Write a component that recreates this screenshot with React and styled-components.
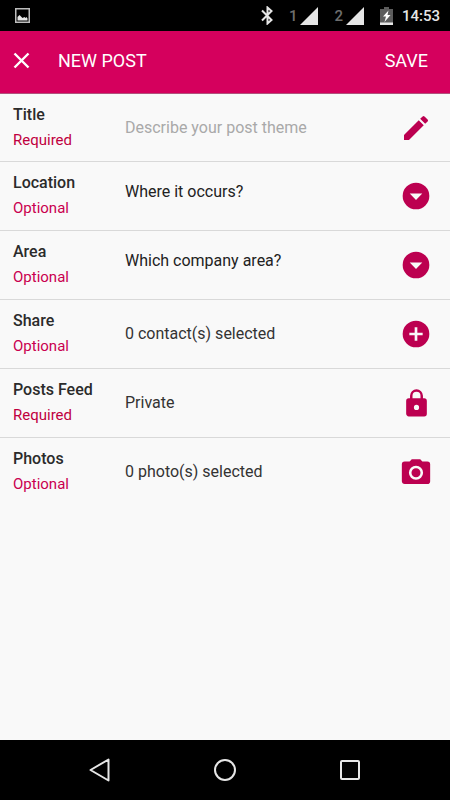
import React, { useState } from "react";
import styled, { createGlobalStyle } from "styled-components";

const GlobalStyle = createGlobalStyle`
    * {
        box-sizing: border-box;
    }

    body {
        margin: 0;
        background-color: #f9f9f9;
        font-family: Roboto, "Liberation Sans", sans-serif;
    }

    button, input, select {
        font-family: inherit;
    }
`;

const Screen = styled.div`
    display: flex;
    flex-direction: column;
    min-height: 100vh;
    background-color: #f9f9f9;
`;

const StatusBar = styled.div`
    display: flex;
    align-items: center;
    height: 31px;
    padding: 0 10px 0 15px;
    background-color: #000;
    color: #e6e6e6;
`;

const StatusIcons = styled.div`
    display: flex;
    align-items: center;
    margin-left: auto;
`;

const BluetoothIcon = styled.svg`
    margin-right: 16px;
`;

const Sim = styled.div`
    display: flex;
    align-items: center;
    gap: 3px;
    margin-right: 16px;
    color: #6e6e6e;
    font-size: 15px;
    font-weight: 500;
    line-height: 20px;
`;

const Clock = styled.time`
    margin-left: 9px;
    font-size: 15px;
    font-weight: 500;
    line-height: 20px;
`;

const Toolbar = styled.header`
    display: flex;
    align-items: center;
    height: 63px;
    padding: 0 22px 2px 12px;
    background-color: #d5005d;
    border-bottom: 1px solid #b0527c;
    color: #fff;
`;

const ToolbarTitle = styled.h1`
    margin: 0 auto 0 26px;
    font-size: 18px;
    font-weight: 400;
    line-height: 24px;
`;

const PlainButton = styled.button`
    display: flex;
    align-items: center;
    justify-content: center;
    padding: 0;
    border: none;
    background: none;
    color: inherit;
    font-size: 18px;
    line-height: 24px;
    cursor: pointer;

    svg {
        flex-shrink: 0;
    }
`;

const Form = styled.main`
    flex: 1;
`;

const Row = styled.div`
    display: grid;
    grid-template-columns: 112px 1fr 36px;
    align-items: center;
    height: ${(props) => (props.$compact ? "68px" : "69px")};
    padding: 0 18px 0 13px;
    border-bottom: 1px solid #d9d9d9;

    &:last-child {
        border-bottom-color: transparent;
    }
`;

const Label = styled.label`
    display: block;
    color: #2b2b2b;
    font-size: 16px;
    font-weight: 500;
    line-height: 24px;
`;

const Hint = styled.span`
    display: block;
    color: ${(props) => (props.$required ? "#c0003f" : "#c9004f")};
    font-size: 15px;
    font-weight: 400;
    line-height: 26px;
`;

const TextInput = styled.input`
    width: 100%;
    padding: 0;
    border: none;
    outline: none;
    background: none;
    color: #2b2b2b;
    font-size: 16px;
    line-height: 24px;

    &::placeholder {
        color: #a9a9a9;
        opacity: 1;
    }
`;

const Select = styled.select`
    appearance: none;
    width: 100%;
    height: 24px;
    margin-bottom: 8px;
    padding: 0;
    border: none;
    outline: none;
    background: none;
    color: #222;
    font-size: 16px;
    line-height: 24px;
`;

const Value = styled.output`
    color: #333;
    font-size: 16px;
    line-height: 24px;
`;

const Action = styled(PlainButton)`
    width: 32px;
    height: 32px;
    justify-self: end;
    color: #bc0050;
`;

const NavBar = styled.nav`
    display: flex;
    align-items: center;
    justify-content: center;
    gap: 93px;
    height: 60px;
    background-color: #000;
    color: #e6e6e6;
`;

const NavButton = styled(PlainButton)`
    width: 32px;
    height: 32px;
`;

const icons = {
    edit: "M3 17.25V21h3.75L17.81 9.94l-3.75-3.75L3 17.25zM20.71 7.04a1 1 0 0 0 0-1.41l-2.34-2.34a1 1 0 0 0-1.41 0l-1.83 1.83 3.75 3.75 1.83-1.83z",
    down: "M12 2a10 10 0 1 0 0 20 10 10 0 0 0 0-20zM7.3 10.2h9.4L12 15z",
    add: "M12 2a10 10 0 1 0 0 20 10 10 0 0 0 0-20zm5 11h-4v4h-2v-4H7v-2h4V7h2v4h4v2z",
    lock: "M18 8h-1V6A5 5 0 0 0 7 6v2H6a2 2 0 0 0-2 2v10c0 1.1.9 2 2 2h12a2 2 0 0 0 2-2V10a2 2 0 0 0-2-2zm-6 9a2 2 0 1 1 0-4 2 2 0 0 1 0 4zm3.1-9H8.9V6a3.1 3.1 0 0 1 6.2 0v2z",
    camera: "M9 3 7.5 4.5H4a2 2 0 0 0-2 2v12c0 1.1.9 2 2 2h16a2 2 0 0 0 2-2v-12a2 2 0 0 0-2-2h-3.5L15 3H9zm3 14.5a5 5 0 1 1 0-10 5 5 0 0 1 0 10zm0-1.8a3.2 3.2 0 1 0 0-6.4 3.2 3.2 0 0 0 0 6.4z",
};

const Icon = ({ name, size = 32 }) => (
    <svg
        width={size}
        height={size}
        viewBox="0 0 24 24"
        fill="currentColor"
        fillRule="evenodd"
        aria-hidden="true"
    >
        <path d={icons[name]} />
    </svg>
);

const Signal = () => (
    <svg width="18" height="18" viewBox="0 0 18 18" aria-hidden="true">
        <path d="M18 0v18H0z" fill="#e6e6e6" />
    </svg>
);

const FieldLabel = ({ id, title, required }) => (
    <Label htmlFor={id}>
        {title}
        <Hint $required={required}>{required ? "Required" : "Optional"}</Hint>
    </Label>
);

const SelectRow = ({ id, title, prompt, options }) => (
    <Row>
        <FieldLabel id={id} title={title} />
        <Select id={id} defaultValue="">
            <option value="">{prompt}</option>
            {options.map((option) => (
                <option key={option}>{option}</option>
            ))}
        </Select>
        <Action as="label" htmlFor={id}>
            <Icon name="down" />
        </Action>
    </Row>
);

const ValueRow = ({ id, title, required, value, icon, iconSize, action, onAction }) => (
    <Row>
        <FieldLabel id={id} title={title} required={required} />
        <Value id={id}>{value}</Value>
        <Action type="button" aria-label={action} onClick={onAction}>
            <Icon name={icon} size={iconSize} />
        </Action>
    </Row>
);

const App = () => {
    const [title, setTitle] = useState("");
    const [isPrivate, setIsPrivate] = useState(true);

    return (
        <Screen>
            <GlobalStyle />
            <StatusBar>
                <svg width="15" height="15" viewBox="0 0 15 15" aria-hidden="true">
                    <path d="M.75.75h13.5v13.5H.75z" fill="none" stroke="#bdbdbd" strokeWidth="1.5" />
                    <path d="M2.5 12.5V9l2-2 2 2 1 1 2-1 1 1 1-1 1 1.5v2z" fill="#e6e6e6" />
                </svg>
                <StatusIcons>
                    <BluetoothIcon width="12" height="19" viewBox="0 0 12 19" aria-hidden="true">
                        <path
                            d="M1 4.5 10.5 14l-4 3.5v-16l4 3.5L1 14.5"
                            fill="none"
                            stroke="#e6e6e6"
                            strokeWidth="2"
                        />
                    </BluetoothIcon>
                    <Sim>
                        1<Signal />
                    </Sim>
                    <Sim>
                        2<Signal />
                    </Sim>
                    <svg width="13" height="18" viewBox="0 0 13 18" aria-hidden="true">
                        <path d="M4 0h5v2h4v16H0V2h4z" fill="#5c5c5c" />
                        <path d="M0 15.5h13V18H0z" fill="#e6e6e6" />
                        <path d="M8.5 3.5l-5.5 6h3L4.5 15l6-7h-3z" fill="#fff" />
                    </svg>
                    <Clock>14:53</Clock>
                </StatusIcons>
            </StatusBar>
            <Toolbar>
                <PlainButton type="button" aria-label="Close">
                    <svg width="20" height="20" viewBox="0 0 20 20" aria-hidden="true">
                        <path d="M2.5 2.5l14 14M16.5 2.5l-14 14" stroke="#fff" strokeWidth="2.4" />
                    </svg>
                </PlainButton>
                <ToolbarTitle>NEW POST</ToolbarTitle>
                <PlainButton type="button">SAVE</PlainButton>
            </Toolbar>
            <Form>
                <Row $compact>
                    <FieldLabel id="title" title="Title" required />
                    <TextInput
                        id="title"
                        placeholder="Describe your post theme"
                        value={title}
                        onChange={(e) => setTitle(e.target.value)}
                    />
                    <Action as="label" htmlFor="title">
                        <Icon name="edit" />
                    </Action>
                </Row>
                <SelectRow id="location" title="Location" prompt="Where it occurs?" options={["Office", "Factory"]} />
                <SelectRow id="area" title="Area" prompt="Which company area?" options={["Sales", "Production"]} />
                <ValueRow id="share" title="Share" value="0 contact(s) selected" icon="add" action="Add contacts" />
                <ValueRow
                    id="feed"
                    title="Posts Feed"
                    required
                    value={isPrivate ? "Private" : "Public"}
                    icon="lock"
                    iconSize={31}
                    action="Change visibility"
                    onAction={() => setIsPrivate(!isPrivate)}
                />
                <ValueRow
                    id="photos"
                    title="Photos"
                    value="0 photo(s) selected"
                    icon="camera"
                    iconSize={34}
                    action="Take photo"
                />
            </Form>
            <NavBar>
                <NavButton type="button" aria-label="Back">
                    <svg width="24" height="26" viewBox="0 0 24 26" aria-hidden="true">
                        <path
                            d="M20.5 2.5v21L2.5 13z"
                            fill="none"
                            stroke="currentColor"
                            strokeWidth="2"
                            strokeLinejoin="round"
                        />
                    </svg>
                </NavButton>
                <NavButton type="button" aria-label="Home">
                    <svg width="24" height="24" viewBox="0 0 24 24" aria-hidden="true">
                        <circle cx="12" cy="12" r="10" fill="none" stroke="currentColor" strokeWidth="2" />
                    </svg>
                </NavButton>
                <NavButton type="button" aria-label="Recent apps">
                    <svg width="20" height="20" viewBox="0 0 20 20" aria-hidden="true">
                        <rect x="1" y="1" width="18" height="18" rx="1" fill="none" stroke="currentColor" strokeWidth="2" />
                    </svg>
                </NavButton>
            </NavBar>
        </Screen>
    );
};

export default App;
